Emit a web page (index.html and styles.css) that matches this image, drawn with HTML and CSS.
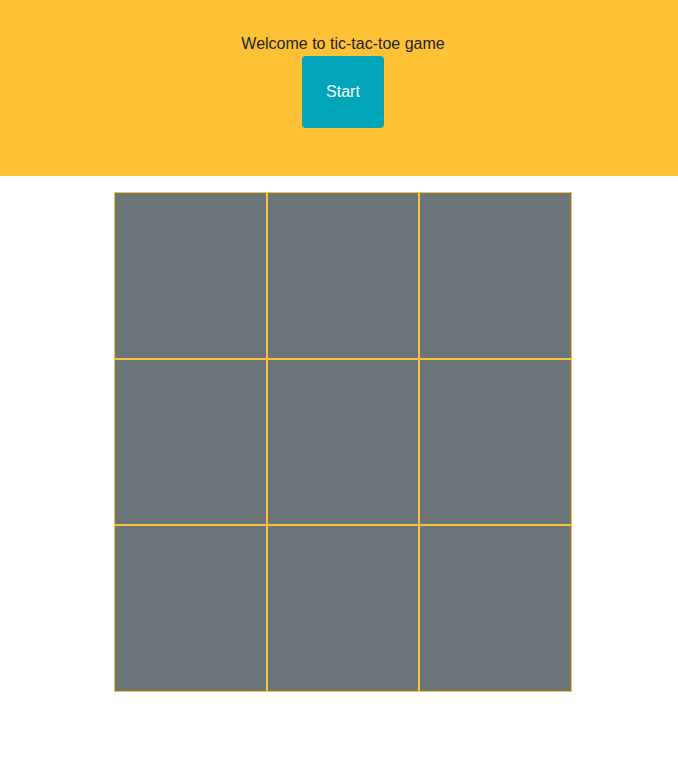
FILE: index.html
```html
<!DOCTYPE html>
<html>
<head>
<meta charset="utf-8">
<link rel="stylesheet" href="styles.css">
</head>
<body>
<header class="hero">
  <p class="welcome">Welcome to tic-tac-toe game</p>
  <button class="start">Start</button>
</header>
<main class="board">
  <div class="cell"></div><div class="cell"></div><div class="cell"></div>
  <div class="cell"></div><div class="cell"></div><div class="cell"></div>
  <div class="cell"></div><div class="cell"></div><div class="cell"></div>
</main>
</body>
</html>
```
FILE: styles.css
```css
html, body {
  margin: 0;
  padding: 0;
  background: #fff;
  font-family: "Liberation Sans", Arial, sans-serif;
  font-size: 16px;
  line-height: 24px;
  color: #212529;
}
.hero {
  background: #ffc136;
  height: 176px;
  box-sizing: border-box;
  padding-top: 32px;
  padding-left: 8px;
  display: flex;
  flex-direction: column;
  align-items: center;
}
.welcome {
  margin: 0;
}
.start {
  font-family: inherit;
  font-size: 16px;
  line-height: 24px;
  color: #fff;
  background: #00a5b9;
  border: none;
  border-radius: 4px;
  padding: 24px 23px;
  width: 82px;
  height: 72px;
}
.board {
  margin: 16px 0 0 114px;
  width: 458px;
  display: grid;
  grid-template-columns: repeat(3, 1fr);
  grid-template-rows: repeat(3, 166.67px);
}
.cell {
  background: #6b757a;
  border: 1px solid #ffc136;
}
```
